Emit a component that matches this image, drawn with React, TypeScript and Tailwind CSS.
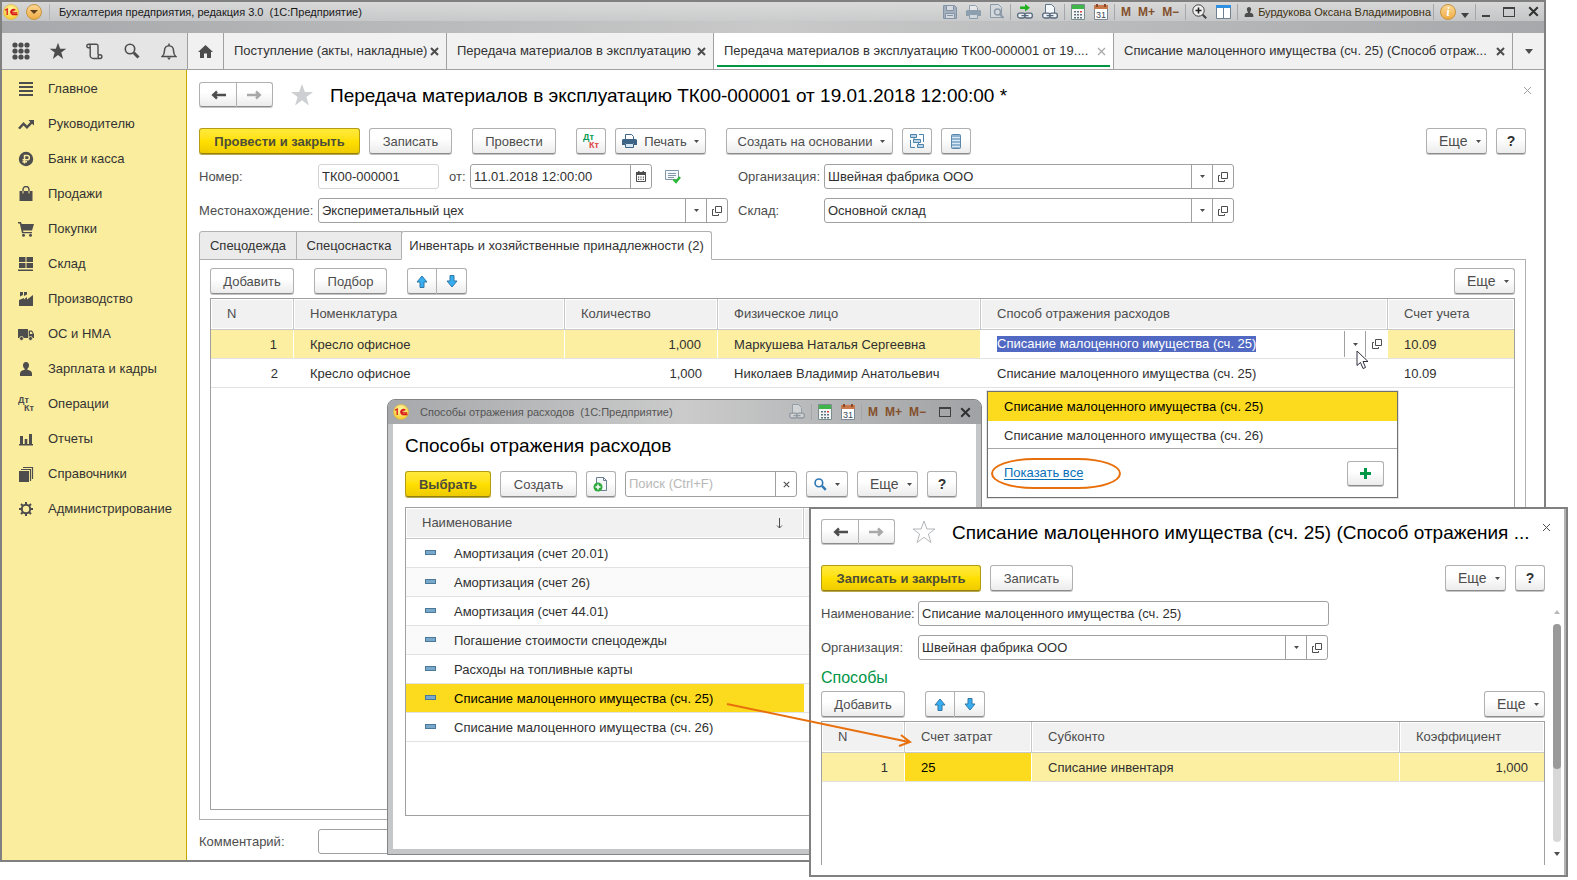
import * as React from "react"
import { cva, type VariantProps } from "class-variance-authority"
import { twMerge } from "tailwind-merge"

const buttonVariants = cva(
    "flex h-[26px] shrink-0 items-center justify-center rounded-[3px] border text-[13px] leading-none whitespace-nowrap",
    {
        variants: {
            variant: {
                default:
                    "border-[#b0b0b0] border-b-[#8c8c8c] bg-linear-to-b from-white from-40% to-[#ececec] text-[#4d4d4d] shadow-[0_1px_0_#c4c4c4]",
                primary:
                    "border-[#b39b12] border-b-[#94800c] bg-linear-to-b from-[#ffea3a] via-[#ffe000] to-[#efcb00] font-bold text-[#4d4d3a] shadow-[0_1px_0_#b8a850]",
            },
        },
        defaultVariants: { variant: "default" },
    },
)

interface ButtonProps extends React.ButtonHTMLAttributes<HTMLButtonElement>, VariantProps<typeof buttonVariants> {}

const Button = ({ className, variant, ...props }: ButtonProps) => (
    <button type="button" className={twMerge(buttonVariants({ variant }), className)} {...props} />
)

/* ---------- Icons ---------- */

type IconProps = { className?: string }

const Caret = ({ className = "" }: IconProps) => (
    <svg width="5" height="3" viewBox="0 0 5 3" className={className} fill="#4d4d4d">
        <path d="M0 0h5L2.5 3z" />
    </svg>
)

const Cross = ({ size = 9, color = "#4d4d4d", weight = 2 }: { size?: number; color?: string; weight?: number }) => (
    <svg width={size} height={size} viewBox="0 0 9 9" stroke={color} strokeWidth={weight} fill="none">
        <path d="M1 1l7 7M8 1L1 8" />
    </svg>
)

const OpenIcon = () => (
    <svg width="10" height="10" viewBox="0 0 10 10" fill="none" stroke="#4d4d4d">
        <path d="M3.5 .5h6v6h-6zM2 3.5H.5v6h6V8" />
    </svg>
)

const BackArrow = ({ color = "#4d4d4d", flip = false }: { color?: string; flip?: boolean }) => (
    <svg width="15" height="10" viewBox="0 0 15 10" fill="none" stroke={color} strokeWidth="2.400">
        <path d={flip ? "M0 5h13M9 1.500L12.800 5 9 8.500" : "M15 5H2M6 1.500L2.200 5 6 8.500"} />
    </svg>
)

const StarIcon = ({ size = 16, fill = "#4d4d4d", stroke = "none" }: { size?: number; fill?: string; stroke?: string }) => (
    <svg width={size} height={size} viewBox="0 0 24 24" fill={fill} stroke={stroke} strokeWidth="1">
        <path d="M12 1l2.900 8H23l-6.600 5 2.500 8.500L12 17.300 5.100 22.500 7.600 14 1 9h8.100z" />
    </svg>
)

const MoveArrow = ({ down = false }: { down?: boolean }) => (
    <svg width="12" height="13" viewBox="0 0 12 13" fill="#36aef0" stroke="#3077a8">
        <path d={down ? "M4 .5h4V6h3L6 12 1 6h3z" : "M4 12.500h4V7h3L6 1 1 7h3z"} />
    </svg>
)

const LogoIcon = () => (
    <svg width="16" height="16" viewBox="0 0 16 16">
        <defs>
            <radialGradient id="logoFill" cx="50%" cy="35%" r="65%">
                <stop offset="0" stopColor="#fffab0" />
                <stop offset="1" stopColor="#f6c928" />
            </radialGradient>
        </defs>
        <circle cx="8" cy="8" r="7.600" fill="url(#logoFill)" stroke="#d9b64c" strokeWidth=".6" />
        <path
            d="M2 6.200l2.200-1.200v6M12.300 6.300A2.600 2.600 0 1 0 9.500 10.500h5M10.900 7.300a1.100 1.100 0 1 0-1 1.500h4.300"
            fill="none"
            stroke="#d8181c"
            strokeWidth="1.300"
        />
    </svg>
)

const CalculatorIcon = () => (
    <svg width="14" height="16" viewBox="0 0 14 16">
        <path fill="#f4f6f6" stroke="#7b8c8c" d="M.5.5h13v15H.5z" />
        <path fill="#3fb54a" d="M1 1h12v4H1z" />
        <path fill="#5f7480" d="M3 7h2v1.500H3zM6 7h2v1.500H6zM3 10h2v1.500H3zM6 10h2v1.500H6zM3 13h2v1.500H3zM6 13h2v1.500H6zM9 10h2v1.500H9zM9 13h2v1.500H9z" />
        <path fill="#e04040" d="M9 7h2v1.500H9z" />
    </svg>
)

const CalendarIcon = () => (
    <svg width="14" height="16" viewBox="0 0 14 16">
        <path fill="#fff" stroke="#7b8794" d="M.5 2.500h13v13H.5z" />
        <path fill="#c8784a" d="M0 1h14v4H0z" />
        <path fill="#8a4a2a" d="M2 0h2v3H2zM10 0h2v3h-2z" />
        <text x="7" y="13.500" textAnchor="middle" fontSize="9" fontFamily="Liberation Sans, sans-serif" fill="#3a4a5a">
            31
        </text>
    </svg>
)

const LinkPageIcon = ({ arrow = false, faded = false }: { arrow?: boolean; faded?: boolean }) => (
    <svg width="16" height="16" viewBox="0 0 16 16" fill="none" className={faded ? "opacity-40" : ""}>
        {arrow ? (
            <path fill="#20b020" d="M3 2.500h5V0l5 3.700L8 7.500V5H3z" />
        ) : (
            <path fill="#f5f8fb" stroke="#60748a" d="M3.500 9V.5h6l3 3V9" />
        )}
        <rect x=".700" y="9.200" width="7.500" height="4.800" rx="2" fill="#eef2f5" stroke="#56687a" strokeWidth="1.300" />
        <rect x="7.800" y="9.200" width="7.500" height="4.800" rx="2" fill="#eef2f5" stroke="#56687a" strokeWidth="1.300" />
        <path stroke="#56687a" strokeWidth="1.300" d="M4.500 11.600h7" />
    </svg>
)

const SaveIcon = () => (
    <svg width="14" height="14" viewBox="0 0 14 14" fill="none" stroke="#8494a6">
        <path fill="#a3afbd" d="M.5.5h11l2 2v11H.5z" />
        <path fill="#d5dade" d="M3.500.5h7v5h-7zM2.500 8.500h9v5h-9z" />
        <path d="M4 10.500h6" />
    </svg>
)

const PrinterIcon = ({ faded = false }: { faded?: boolean }) => (
    <svg width="15" height="14" viewBox="0 0 15 14" className={faded ? "opacity-45" : ""}>
        <path fill="#fff" stroke="#3d6485" d="M3.500 6V.5h6l2 2V6" />
        <path fill="#3d6485" d="M1 5h13l1 1v5h-3V9H3v2H0V6z" />
        <path fill="#d6e6f2" stroke="#3d6485" d="M3.500 9.500h8v4h-8z" />
    </svg>
)

const PreviewIcon = () => (
    <svg width="14" height="15" viewBox="0 0 14 15" fill="none" stroke="#8c9aa8">
        <path fill="#d3d8dc" d="M.5.5h8l3 3v10H.5z" />
        <circle cx="7.500" cy="8" r="3" strokeWidth="1.500" />
        <path strokeWidth="2" d="M10 10.500l3.500 3.500" />
    </svg>
)

const ZoomInIcon = () => (
    <svg width="15" height="15" viewBox="0 0 15 15" fill="none" stroke="#404040">
        <circle cx="6.500" cy="6.500" r="5.700" fill="#f0f0f0" />
        <path strokeWidth="1.600" d="M3.500 6.500h6M6.500 3.500v6" stroke="#202020" />
        <path strokeWidth="2" d="M10.700 10.700l3.500 3.500" />
    </svg>
)

const PanelsIcon = () => (
    <svg width="15" height="14" viewBox="0 0 15 14">
        <path fill="#fff" stroke="#708090" d="M.5.5h14v13H.5zM7.500 3v10" />
        <path fill="#2f8fe0" d="M0 0h15v3H0z" />
    </svg>
)

const PersonIcon = ({ size = 14 }: { size?: number }) => (
    <svg width={size} height={size} viewBox="0 0 14 14" fill="#4d4d4d">
        <path d="M7 0c2 0 3 1.500 3 3.300C10 5 9.300 6.300 8.500 7v1c2.500.4 4.500 1.500 4.500 3.500V14H1v-2.500C1 9.500 3 8.400 5.500 8V7C4.700 6.300 4 5 4 3.300 4 1.500 5 0 7 0z" />
    </svg>
)

const SearchIcon = ({ color = "#4d4d4d" }: { color?: string }) => (
    <svg width="16" height="16" viewBox="0 0 16 16" fill="none" stroke={color}>
        <circle cx="6" cy="6" r="4.700" strokeWidth="1.600" />
        <path strokeWidth="3" d="M9.800 9.800l4.700 4.700" />
    </svg>
)

const DtKtIcon = ({ colored = false }: { colored?: boolean }) => (
    <svg width="17" height="16" viewBox="0 0 17 16" fontFamily="Liberation Sans, sans-serif" fontWeight="bold" fontSize="9">
        <text x="0" y="7" fill={colored ? "#0a9a50" : "#4d4d4d"}>
            Дт
        </text>
        <text x="6" y="15" fill={colored ? "#e04444" : "#4d4d4d"}>
            Кт
        </text>
    </svg>
)

const DateIcon = () => (
    <svg width="10" height="11" viewBox="0 0 10 11">
        <path fill="none" stroke="#4d4d4d" d="M.5 2.500h9v8h-9z" />
        <path fill="#4d4d4d" d="M0 1h10v3H0zM2 0h1.500v2H2zM6.500 0H8v2H6.500zM2 5.500h1.200v1.200H2zM4.400 5.500h1.200v1.200H4.400zM6.800 5.500H8v1.200H6.800zM2 7.800h1.200V9H2zM4.400 7.800h1.200V9H4.400zM6.800 7.800H8V9H6.800z" />
    </svg>
)

const PostedIcon = () => (
    <svg width="16" height="14" viewBox="0 0 16 14" fill="none">
        <path fill="#f6f9fb" stroke="#8296a6" d="M.5.5h13v9H.5z" />
        <path stroke="#8296a6" d="M3 3.500h8M3 5.500h8M3 7.500h6" />
        <path stroke="#2cb834" strokeWidth="2.400" d="M8.500 9.500l2.500 2.500 4-5" />
    </svg>
)

const StructureIcon = () => (
    <svg width="16" height="16" viewBox="0 0 16 16" fill="none" stroke="#4c83ad">
        <path fill="#bcd5e8" d="M1.500 1.500h6v3h-6zM4.500 6.500h7v3h-7zM8.500 11.500h6v3h-6z" />
        <path d="M10 1.500h4.500V9M1.500 7v7.500H6M5 4.500v2M9.500 9.500v2" />
    </svg>
)

const RegisterIcon = () => (
    <svg width="10" height="15" viewBox="0 0 10 15">
        <rect x=".5" y=".5" width="9" height="14" rx="1" fill="#8fb4d2" stroke="#5a88ab" />
        <path stroke="#d8e8f4" d="M1 3.500h8M1 6.500h8M1 9.500h8M1 12.500h8" />
    </svg>
)

const CopyAddIcon = () => (
    <svg width="16" height="16" viewBox="0 0 16 16">
        <path fill="#f4f8fb" stroke="#6a7f92" d="M3.500 1.500h7l3 3v10h-10zM10.500 1.500v3h3" />
        <circle cx="5" cy="11" r="4.500" fill="#2fa83e" />
        <path stroke="#fff" strokeWidth="1.500" d="M5 8.500v5M2.500 11h5" />
    </svg>
)

const itemIcons: Record<string, React.ReactNode> = {
    main: <path d="M1 1h14v2H1zM1 5h14v2H1zM1 9h14v2H1zM1 13h14v2H1z" />,
    chart: <path d="M0 12l5.500-6 3.500 3.500 3.300-3.600L10.500 4H16v5.500l-2-1.800-5 5.200L5.500 9.400 2 13.300z" />,
    ruble: (
        <>
            <circle cx="8" cy="8" r="7.200" />
            <path d="M6.500 12.500V4.500h2.700a2.100 2.100 0 0 1 0 4.300H4.500M4.500 10.700H9" fill="none" stroke="#fbeb9e" strokeWidth="1.500" />
        </>
    ),
    bag: (
        <>
            <path d="M1.500 5h13v10h-13z" />
            <path d="M5 7V3.500a3 3 0 0 1 6 0V7" fill="none" stroke="#4d4d4d" strokeWidth="1.400" />
            <path d="M5 5v2.500M11 5v2.500" stroke="#fbeb9e" />
        </>
    ),
    cart: (
        <>
            <path d="M0 1h3l.700 2H16l-2 6.500H5L5.400 11H14v1.300H4L1.800 2.500H0z" />
            <circle cx="5.500" cy="14.200" r="1.500" />
            <circle cx="12.500" cy="14.200" r="1.500" />
        </>
    ),
    warehouse: <path d="M1 1h6.500v5H1zM8.500 1H15v5H8.500zM1 7h6.500v5H1zM8.500 7H15v5H8.500zM0 13.500h15V15H0z" />,
    factory: <path d="M1 15V9l5-2v1.500l3-2.500v2.500L15 4v11zM2 1h3v3L2 5.500zM6 1h3v2.500L6 5z" />,
    truck: (
        <>
            <path d="M0 3h10v9H0zM10.700 4.500H14l2 3.500v4h-5.300z" />
            <path d="M12 5.700h1.500l1.200 2.300H12z" fill="#fbeb9e" />
            <circle cx="3.500" cy="12.500" r="2" stroke="#fbeb9e" strokeWidth=".8" />
            <circle cx="12.500" cy="12.500" r="2" stroke="#fbeb9e" strokeWidth=".8" />
        </>
    ),
    person: <path d="M8 1c2 0 3 1.400 3 3.200 0 1.600-.8 3-1.700 3.600v1c2.700.5 4.700 1.700 4.700 3.700V15H2v-2.500c0-2 2-3.200 4.700-3.700v-1C5.800 7.200 5 5.800 5 4.200 5 2.400 6 1 8 1z" />,
    reports: <path d="M1 13h14v1.500H1zM2 5h3v8H2zM6.700 8h2.600v5H6.700zM11 3h3v10h-3z" />,
    books: (
        <>
            <path d="M1 5h10v11H1z" />
            <path d="M3 3.500h9.500V15M5 1.500h9.500V13" fill="none" stroke="#4d4d4d" strokeWidth="1.200" />
        </>
    ),
    gear: (
        <>
            <circle cx="8" cy="8" r="4.200" fill="none" stroke="#4d4d4d" strokeWidth="2" />
            <path
                d="M8 1v2.500M8 12.500V15M1 8h2.500M12.500 8H15M3 3l1.800 1.800M11.200 11.200L13 13M13 3l-1.800 1.800M4.800 11.200L3 13"
                stroke="#4d4d4d"
                strokeWidth="2"
            />
        </>
    ),
}

/* ---------- Shared form parts ---------- */

const MoreButton = () => (
    <Button className="w-[61px] justify-start pl-3 text-[14px]">
        Еще
        <Caret className="ml-2" />
    </Button>
)

const HelpButton = () => (
    <Button className="w-[30px] text-[14px] font-bold text-[#303030]" aria-label="Справка">
        ?
    </Button>
)

const NavButtons = () => (
    <div className="flex">
        <Button className="h-[25px] w-[38px] rounded-r-none" aria-label="Назад">
            <BackArrow />
        </Button>
        <Button className="h-[25px] w-[36px] rounded-l-none border-l-0" aria-label="Вперед">
            <BackArrow color="#a8a8a8" flip />
        </Button>
    </div>
)

const MoveButtons = () => (
    <div className="flex">
        <Button className="w-[30px] rounded-r-none" aria-label="Переместить вверх">
            <MoveArrow />
        </Button>
        <Button className="w-[30px] rounded-l-none border-l-0" aria-label="Переместить вниз">
            <MoveArrow down />
        </Button>
    </div>
)

interface FieldProps {
    id: string
    label: string
    value: string
    labelClass: string
    boxClass: string
    buttons?: React.ReactNode[]
}

/** Label and text box, with optional buttons built into the right end of the box */
const Field = ({ id, label, value, labelClass, boxClass, buttons = [] }: FieldProps) => (
    <div className="flex items-center">
        <label htmlFor={id} className={twMerge("shrink-0 whitespace-nowrap text-[#4d4d4d]", labelClass)}>
            {label}
        </label>
        <div className={twMerge("flex h-[25px] overflow-hidden rounded-[3px] border border-[#a0a0a0] bg-white", boxClass)}>
            <input id={id} defaultValue={value} className="min-w-0 flex-1 px-[3px] text-[#303030] outline-none" />
            {buttons.map((icon, i) => (
                <button
                    key={i}
                    type="button"
                    aria-label={i === 0 ? "Выбрать" : "Открыть"}
                    className="flex w-[21px] items-center justify-center border-l border-[#a0a0a0]"
                >
                    {icon}
                </button>
            ))}
        </div>
    </div>
)

const Th = ({ className, ...props }: React.ThHTMLAttributes<HTMLTableCellElement>) => (
    <th
        className={twMerge(
            "h-[31px] border-r border-b border-[#c8c8c8] bg-[#f1f1f1] px-4 text-left font-normal text-[#4d4d4d] shadow-[inset_0_0_0_1px_#fff] last:border-r-0",
            className,
        )}
        {...props}
    />
)

const Td = ({ className, ...props }: React.TdHTMLAttributes<HTMLTableCellElement>) => (
    <td className={twMerge("h-[29px] border-b border-[#e2e2e2] px-4 pt-[2px] text-[#303030]", className)} {...props} />
)

/* ---------- Title bar and tabs ---------- */

const Separator = () => <span className="-mx-[3px] h-4 w-px bg-[#a4a6a8]" />

const MemoryButtons = () => (
    <div className="flex gap-[7px]">
        {["M", "M+", "M−"].map((m) => (
            <button key={m} type="button" className="text-[12px] font-bold text-[#84502c]">
                {m}
            </button>
        ))}
    </div>
)

const TitleBar = () => (
    <header className="h-[31px] shrink-0 bg-linear-to-r from-[#a6a8ab] via-[#c9c9c9] to-[#a6a8ab] text-[11px]">
        <div className="flex h-[19px] items-center bg-linear-to-b from-[#dcdcdc]/90 to-[#cbcccd]/80 pr-[5px] pl-px">
            <LogoIcon />
            <button
                type="button"
                aria-label="Меню"
                className="ml-[7px] flex size-4 items-center justify-center rounded-full border border-[#c89440] bg-linear-to-b from-[#fbd792] to-[#efac42]"
            >
                <svg width="8" height="4" viewBox="0 0 8 4" fill="#604020">
                    <path d="M0 0h8L4 4z" />
                </svg>
            </button>
            <span className="ml-[7px] h-4 w-px bg-[#b4b4b4]" />
            <span className="ml-[9px] whitespace-pre text-[#181818]">Бухгалтерия предприятия, редакция 3.0  (1С:Предприятие)</span>
            <div className="ml-auto flex items-center gap-[9px]">
                <SaveIcon />
                <PrinterIcon faded />
                <PreviewIcon />
                <Separator />
                <LinkPageIcon arrow />
                <LinkPageIcon />
                <Separator />
                <CalculatorIcon />
                <CalendarIcon />
                <Separator />
                <MemoryButtons />
                <Separator />
                <ZoomInIcon />
                <PanelsIcon />
                <Separator />
                <span className="-mr-1 flex items-center gap-1 whitespace-nowrap text-[#3c3010]">
                    <PersonIcon size={10} />
                    Бурдукова Оксана Владимировна
                </span>
                <Separator />
                <button
                    type="button"
                    aria-label="О программе"
                    className="flex size-4 items-center justify-center rounded-full border border-[#c89440] bg-linear-to-b from-[#fbd792] to-[#efac42] font-serif text-[12px] leading-none font-bold text-white italic"
                >
                    i
                </button>
                <svg width="8" height="5" viewBox="0 0 8 5" fill="#404040" className="-ml-1 mt-2">
                    <path d="M0 0h8L4 5z" />
                </svg>
                <Separator />
                <span className="mt-2 h-[2px] w-2 bg-[#404040]" />
                <span className="ml-1 h-[10px] w-3 border border-t-2 border-[#404040]" />
                <span className="ml-1">
                    <Cross size={11} color="#303030" weight={1.6} />
                </span>
            </div>
        </div>
    </header>
)

const tabs = [
    { title: "Поступление (акты, накладные)", className: "w-[223px]" },
    { title: "Передача материалов в эксплуатацию", className: "w-[267px]" },
    { title: "Передача материалов в эксплуатацию ТК00-000001 от 19....", className: "w-[400px]", active: true },
    { title: "Списание малоценного имущества (сч. 25) (Способ отраж...", className: "min-w-0 flex-1" },
]

const TabBar = () => (
    <div className="flex h-[37px] shrink-0 border-b border-[#a0a0a0] bg-[#f1f1f1]">
        <div className="flex w-[185px] shrink-0 items-center bg-[#e5e5e5] *:flex *:w-[37px] *:justify-center">
            <button type="button" aria-label="Меню функций">
                <svg width="18" height="18" viewBox="0 0 18 18" fill="#4d4d4d">
                    {[3, 9, 15].map((y) => [3, 9, 15].map((x) => <circle key={`${x}-${y}`} cx={x} cy={y} r="2.600" />))}
                </svg>
            </button>
            <button type="button" aria-label="Избранное">
                <StarIcon size={18} />
            </button>
            <button type="button" aria-label="История">
                <svg width="17" height="17" viewBox="0 0 17 17" fill="none" stroke="#4d4d4d" strokeWidth="1.400">
                    <path d="M4.200 4.700H2.500A1.700 1.700 0 1 1 4.200 3v9.500a3 3 0 0 0 3 3M2.500 1.200h7.800a1.700 1.700 0 0 1 1.700 1.800v8.800M7.200 15.500h6.800a1.900 1.900 0 1 0-1.900-1.900 2 2 0 0 0 .6 1.400" />
                </svg>
            </button>
            <button type="button" aria-label="Поиск">
                <SearchIcon />
            </button>
            <button type="button" aria-label="Уведомления">
                <svg width="16" height="17" viewBox="0 0 16 17" fill="none" stroke="#4d4d4d" strokeWidth="1.500">
                    <path d="M1.200 13.500c1.800-1.500 2.300-3 2.300-6a4.500 4.800 0 0 1 9 0c0 3 .5 4.500 2.300 6zM8 2.700V.5" />
                    <path fill="#4d4d4d" stroke="none" d="M6 14.500h4L8 17z" />
                </svg>
            </button>
        </div>
        <button
            type="button"
            aria-label="Начальная страница"
            className="flex w-[37px] shrink-0 items-center justify-center border-x border-[#a0a0a0]"
        >
            <svg width="15" height="13" viewBox="0 0 15 13" fill="#4d4d4d">
                <path d="M7.500 0L15 7h-2v6H9V8.500H6V13H2V7H0z" />
            </svg>
        </button>
        {tabs.map(({ title, className, active }) => (
            <div
                key={title}
                className={twMerge(
                    "relative flex items-center justify-between border-r border-[#a0a0a0] pr-[7px] pl-[10px] whitespace-nowrap text-[#333]",
                    className,
                    active && "bg-white",
                )}
            >
                <button type="button">{title}</button>
                <button type="button" aria-label="Закрыть">
                    <Cross color={active ? "#a8a8a8" : "#4d4d4d"} weight={active ? 1.3 : 2} />
                </button>
                {active && <span className="absolute inset-x-[3px] bottom-[2px] h-[2px] bg-[#009646]" />}
            </div>
        ))}
        <button type="button" aria-label="Список вкладок" className="flex w-[31px] shrink-0 items-center justify-center">
            <svg width="8" height="5" viewBox="0 0 8 5" fill="#4d4d4d">
                <path d="M0 0h8L4 5z" />
            </svg>
        </button>
    </div>
)

const sections = [
    { name: "Главное", icon: "main" },
    { name: "Руководителю", icon: "chart" },
    { name: "Банк и касса", icon: "ruble" },
    { name: "Продажи", icon: "bag" },
    { name: "Покупки", icon: "cart" },
    { name: "Склад", icon: "warehouse" },
    { name: "Производство", icon: "factory" },
    { name: "ОС и НМА", icon: "truck" },
    { name: "Зарплата и кадры", icon: "person" },
    { name: "Операции", icon: "dtkt" },
    { name: "Отчеты", icon: "reports" },
    { name: "Справочники", icon: "books" },
    { name: "Администрирование", icon: "gear" },
]

const Sidebar = () => (
    <nav className="w-[185px] shrink-0 border-r border-[#c4a800] bg-[#fbed9e]">
        {sections.map(({ name, icon }) => (
            <a key={name} href="#" className="flex h-[35px] items-center pt-[2px] pl-4 text-[#333]">
                <span className="w-[30px]">
                    {icon === "dtkt" ? (
                        <DtKtIcon />
                    ) : (
                        <svg width="16" height="16" viewBox="0 0 16 16" fill="#4d4d4d">
                            {itemIcons[icon]}
                        </svg>
                    )}
                </span>
                {name}
            </a>
        ))}
    </nav>
)

/* ---------- Document form ---------- */

const items = [
    { n: 1, name: "Кресло офисное", qty: "1,000", person: "Маркушева Наталья Сергеевна", way: "Списание малоценного имущества (сч. 25)", account: "10.09" },
    { n: 2, name: "Кресло офисное", qty: "1,000", person: "Николаев Владимир Анатольевич", way: "Списание малоценного имущества (сч. 25)", account: "10.09" },
]

const ItemsTable = () => (
    <div className="min-h-0 flex-1 border border-[#a0a0a0]">
        <table className="w-full table-fixed border-separate border-spacing-0">
            <colgroup>
                <col className="w-[83px]" />
                <col className="w-[271px]" />
                <col className="w-[153px]" />
                <col className="w-[263px]" />
                <col />
                <col className="w-[126px]" />
            </colgroup>
            <thead>
                <tr>
                    <Th>N</Th>
                    <Th>Номенклатура</Th>
                    <Th>Количество</Th>
                    <Th>Физическое лицо</Th>
                    <Th>Способ отражения расходов</Th>
                    <Th>Счет учета</Th>
                </tr>
            </thead>
            <tbody>
                {items.map((item) => {
                    const current = item.n === 1
                    const tone = current ? "bg-[#fcefa1] border-r border-r-white" : ""
                    return (
                        <tr key={item.n}>
                            <Td className={twMerge(tone, "text-right")}>{item.n}</Td>
                            <Td className={tone}>{item.name}</Td>
                            <Td className={twMerge(tone, "text-right")}>{item.qty}</Td>
                            <Td className={tone}>{item.person}</Td>
                            {current ? (
                                <Td className="py-0 pr-0">
                                    <div className="flex h-[28px] items-center">
                                        <span className="bg-[#5169c2] text-white">{item.way}</span>
                                        <button type="button" aria-label="Выбрать" className="ml-auto flex h-[26px] w-[22px] items-center justify-center border-x border-[#a0a0a0]">
                                            <Caret />
                                        </button>
                                        <button type="button" aria-label="Открыть" className="flex w-[22px] justify-center">
                                            <OpenIcon />
                                        </button>
                                    </div>
                                </Td>
                            ) : (
                                <Td>{item.way}</Td>
                            )}
                            <Td className={current ? "bg-[#fcefa1]" : ""}>{item.account}</Td>
                        </tr>
                    )
                })}
            </tbody>
        </table>
    </div>
)

const DocumentForm = () => (
    <main className="flex min-w-0 flex-1 flex-col bg-white pr-[18px] pb-[6px] pl-3">
        <div className="mt-3 -mr-[6px] flex h-[25px] items-center">
            <NavButtons />
            <span className="ml-[17px]">
                <StarIcon size={24} fill="#cdcfd2" />
            </span>
            <h1 className="ml-4 pt-[2px] text-[19px] leading-6 whitespace-nowrap text-black">
                Передача материалов в эксплуатацию ТК00-000001 от 19.01.2018 12:00:00 *
            </h1>
            <button type="button" aria-label="Закрыть" className="mt-1 ml-auto self-start">
                <Cross color="#a0a0a0" weight={1} />
            </button>
        </div>
        <div className="mt-[21px] flex">
            <Button variant="primary" className="w-[161px]">
                Провести и закрыть
            </Button>
            <Button className="ml-[9px] w-[83px]">Записать</Button>
            <Button className="ml-5 w-[84px]">Провести</Button>
            <Button className="ml-5 w-[30px]" aria-label="Дт/Кт">
                <DtKtIcon colored />
            </Button>
            <Button className="ml-[9px] w-[91px] gap-[7px]">
                <PrinterIcon />
                Печать
                <Caret />
            </Button>
            <Button className="ml-5 w-[167px] gap-2 pl-1">
                Создать на основании
                <Caret />
            </Button>
            <Button className="ml-[9px] w-[30px]" aria-label="Структура подчиненности">
                <StructureIcon />
            </Button>
            <Button className="ml-[9px] w-[30px]" aria-label="Движения документа">
                <RegisterIcon />
            </Button>
            <div className="ml-auto flex gap-[9px]">
                <MoreButton />
                <HelpButton />
            </div>
        </div>
        <div className="mt-[10px] grid grid-cols-[539px_1fr] gap-y-[9px]">
            <div className="flex items-center">
                <Field id="number" label="Номер:" value="ТК00-000001" labelClass="w-[119px]" boxClass="w-[121px] border-[#d4d4d4]" />
                <div className="ml-[10px]">
                    <Field id="date" label="от:" value="11.01.2018 12:00:00" labelClass="w-[21px]" boxClass="w-[182px]" buttons={[<DateIcon />]} />
                </div>
                <span className="ml-[13px]">
                    <PostedIcon />
                </span>
            </div>
            <Field id="org" label="Организация:" value="Швейная фабрика ООО" labelClass="w-[86px]" boxClass="w-[410px]" buttons={[<Caret />, <OpenIcon />]} />
            <Field id="place" label="Местонахождение:" value="Экспериметальный цех" labelClass="w-[119px]" boxClass="w-[410px]" buttons={[<Caret />, <OpenIcon />]} />
            <Field id="store" label="Склад:" value="Основной склад" labelClass="w-[86px]" boxClass="w-[410px]" buttons={[<Caret />, <OpenIcon />]} />
        </div>
        <div className="z-10 mt-2 -mb-px flex h-[29px] *:border *:border-[#b0b0b0]" role="tablist">
            <button type="button" role="tab" className="w-[98px] rounded-tl-[3px] bg-[#ebebeb] whitespace-nowrap text-[#333]">
                Спецодежда
            </button>
            <button type="button" role="tab" className="-ml-px w-[106px] bg-[#ebebeb] whitespace-nowrap text-[#333]">
                Спецоснастка
            </button>
            <button type="button" role="tab" aria-selected className="-ml-px w-[311px] rounded-t-[3px] border-b-white! bg-white whitespace-nowrap text-[#333]">
                Инвентарь и хозяйственные принадлежности (2)
            </button>
        </div>
        <section className="flex min-h-0 flex-1 flex-col border border-[#b0b0b0] px-[10px] pt-2 pb-[9px]">
            <div className="mb-1 flex">
                <Button className="w-[84px]">Добавить</Button>
                <Button className="mr-5 ml-5 w-[73px]">Подбор</Button>
                <MoveButtons />
                <div className="ml-auto">
                    <MoreButton />
                </div>
            </div>
            <ItemsTable />
        </section>
        <div className="mt-[9px]">
            <Field id="comment" label="Комментарий:" value="" labelClass="w-[119px]" boxClass="w-[910px]" />
        </div>
    </main>
)

/* ---------- Windows and pop-ups over the form ---------- */

const ways = [
    "Амортизация (счет 20.01)",
    "Амортизация (счет 26)",
    "Амортизация (счет 44.01)",
    "Погашение стоимости спецодежды",
    "Расходы на топливные карты",
    "Списание малоценного имущества (сч. 25)",
    "Списание малоценного имущества (сч. 26)",
]

const WaysDialog = () => (
    <div
        role="dialog"
        aria-label="Способы отражения расходов"
        className="absolute top-[399px] left-[387px] flex h-[456px] w-[595px] flex-col rounded-t-[8px] border border-[#848484] bg-[#c4c6c8] px-[5px] pb-[5px]"
    >
        <div className="-mx-[5px] flex h-6 shrink-0 items-center rounded-t-[7px] bg-linear-to-r from-[#a6a8ab] via-[#cbcbcb] to-[#a0a2a5] pr-[10px] pl-[5px] text-[11px]">
            <LogoIcon />
            <span className="ml-[11px] whitespace-pre text-[#555]">Способы отражения расходов  (1С:Предприятие)</span>
            <div className="ml-auto flex items-center gap-[9px]">
                <LinkPageIcon faded />
                <Separator />
                <CalculatorIcon />
                <CalendarIcon />
                <Separator />
                <MemoryButtons />
                <Separator />
                <span className="h-[10px] w-3 border border-t-2 border-[#404040]" />
                <Cross size={11} color="#303030" weight={1.6} />
            </div>
        </div>
        <div className="flex min-h-0 flex-1 flex-col bg-white px-3 pb-[33px]">
            <h2 className="mt-[10px] text-[19px] leading-6 text-black">Способы отражения расходов</h2>
            <div className="mt-[13px] flex gap-[9px]">
                <Button variant="primary" className="w-[86px]">
                    Выбрать
                </Button>
                <Button className="w-[77px]">Создать</Button>
                <Button className="w-[30px]" aria-label="Скопировать">
                    <CopyAddIcon />
                </Button>
                <div className="flex h-[26px] w-[172px] rounded-[3px] border border-[#a0a0a0]">
                    <input aria-label="Поиск" placeholder="Поиск (Ctrl+F)" className="min-w-0 flex-1 px-[3px] outline-none placeholder:text-[#b8b8b8]" />
                    <button type="button" aria-label="Очистить" className="flex w-[21px] items-center justify-center border-l border-[#a0a0a0]">
                        <Cross size={7} weight={1.4} />
                    </button>
                </div>
                <Button className="w-[42px] gap-2" aria-label="Найти">
                    <svg width="13" height="13" viewBox="0 0 16 16" fill="none" stroke="#2f78b4">
                        <circle cx="6" cy="6" r="4.700" strokeWidth="2" />
                        <path strokeWidth="3" d="M9.800 9.800l4.700 4.700" />
                    </svg>
                    <Caret />
                </Button>
                <MoreButton />
                <HelpButton />
            </div>
            <div className="mt-[10px] min-h-0 flex-1 border border-[#a0a0a0]">
                <table className="w-full table-fixed border-separate border-spacing-0">
                    <colgroup>
                        <col className="w-[398px]" />
                        <col />
                    </colgroup>
                    <thead>
                        <tr>
                            <Th>
                                <div className="flex items-center justify-between pr-1">
                                    Наименование
                                    <svg width="7" height="11" viewBox="0 0 7 11" fill="none" stroke="#4d4d4d">
                                        <path d="M3.500 0v10M1 7.500L3.500 10 6 7.500" />
                                    </svg>
                                </div>
                            </Th>
                            <Th />
                        </tr>
                    </thead>
                    <tbody>
                        {ways.map((way, i) => (
                            <tr key={way} className={i % 2 ? "bg-[#fafafa]" : "bg-white"}>
                                <Td className={i === 5 ? "bg-[#fcdb1f] text-black" : ""}>
                                    <div className="flex items-center gap-[18px] pl-[3px]">
                                        <span className="mb-[3px] h-[5px] w-[11px] border border-[#4c7898] bg-[#78a8cc]" />
                                        {way}
                                    </div>
                                </Td>
                                <Td />
                            </tr>
                        ))}
                    </tbody>
                </table>
            </div>
        </div>
    </div>
)

const WayPicker = () => (
    <div className="absolute top-[391px] left-[987px] w-[411px] border border-[#707070] bg-white shadow-[0_0_0_1px_#e4e4e4]">
        <button type="button" className="flex h-[29px] w-full items-center bg-[#fcdb1f] px-4 text-black">
            Списание малоценного имущества (сч. 25)
        </button>
        <button type="button" className="flex h-[28px] w-full items-center border-b border-[#a8a8a8] px-4 pt-[2px] text-[#303030]">
            Списание малоценного имущества (сч. 26)
        </button>
        <div className="flex h-[48px] items-center justify-between pr-[13px] pl-[3px]">
            <a
                href="#"
                className="flex h-[31px] w-[130px] items-center rounded-[44px/16px] border-2 border-[#e8700c] pl-[11px] text-[#0a70b8] underline underline-offset-2"
            >
                Показать все
            </a>
            <Button className="h-[25px] w-[37px]" aria-label="Создать">
                <svg width="11" height="11" viewBox="0 0 11 11" stroke="#009646" strokeWidth="3">
                    <path d="M5.500 0v11M0 5.500h11" />
                </svg>
            </Button>
        </div>
    </div>
)

const WayWindow = () => (
    <div
        role="dialog"
        aria-label="Списание малоценного имущества"
        className="absolute top-[507px] left-[809px] flex h-[370px] w-[759px] flex-col border-2 border-[#808080] bg-white shadow-[inset_-2px_0_0_#b4b4b4]"
    >
        <div className="mt-[10px] flex h-[25px] shrink-0 items-center pr-[15px] pl-[10px]">
            <NavButtons />
            <span className="ml-[17px]">
                <StarIcon size={24} fill="#fff" stroke="#b4b6ba" />
            </span>
            <h2 className="ml-4 pt-[2px] text-[19px] leading-6 whitespace-nowrap text-black">
                Списание малоценного имущества (сч. 25) (Способ отражения ...
            </h2>
            <button type="button" aria-label="Закрыть" className="mt-1 ml-auto self-start">
                <Cross weight={1} />
            </button>
        </div>
        <div className="flex min-h-0 flex-1">
            <div className="flex min-w-0 flex-1 flex-col pb-[10px] pl-[10px]">
                <div className="mt-[21px] flex gap-[9px]">
                    <Button variant="primary" className="w-[160px]">
                        Записать и закрыть
                    </Button>
                    <Button className="w-[83px]">Записать</Button>
                    <div className="ml-auto flex gap-[9px]">
                        <MoreButton />
                        <HelpButton />
                    </div>
                </div>
                <div className="mt-[10px] flex flex-col gap-[9px]">
                    <Field id="way-name" label="Наименование:" value="Списание малоценного имущества (сч. 25)" labelClass="w-[97px]" boxClass="w-[411px]" />
                    <Field id="way-org" label="Организация:" value="Швейная фабрика ООО" labelClass="w-[97px]" boxClass="w-[410px]" buttons={[<Caret />, <OpenIcon />]} />
                </div>
                <h3 className="mt-[8px] text-[16px] leading-5 text-[#009646]">Способы</h3>
                <div className="mt-[3px] flex gap-5">
                    <Button className="w-[84px]">Добавить</Button>
                    <MoveButtons />
                    <div className="ml-auto">
                        <MoreButton />
                    </div>
                </div>
                <div className="mt-1 min-h-0 flex-1 border border-b-0 border-[#a0a0a0]">
                    <table className="w-full table-fixed border-separate border-spacing-0">
                        <colgroup>
                            <col className="w-[83px]" />
                            <col className="w-[127px]" />
                            <col />
                            <col className="w-[144px]" />
                        </colgroup>
                        <thead>
                            <tr>
                                <Th>N</Th>
                                <Th>Счет затрат</Th>
                                <Th>Субконто</Th>
                                <Th>Коэффициент</Th>
                            </tr>
                        </thead>
                        <tbody>
                            <tr>
                                <Td className="border-r border-r-white bg-[#fcefa1] text-right">1</Td>
                                <Td className="border-r border-r-white bg-[#fcdb1f] text-black">25</Td>
                                <Td className="border-r border-r-white bg-[#fcefa1]">Списание инвентаря</Td>
                                <Td className="bg-[#fcefa1] text-right">1,000</Td>
                            </tr>
                        </tbody>
                    </table>
                </div>
            </div>
            <div className="flex w-[21px] shrink-0 flex-col items-center pt-[66px] pr-[2px] pb-[19px] pl-[5px]">
                <svg width="6" height="4" viewBox="0 0 6 4" fill="#b8b8b8" className="shrink-0">
                    <path d="M3 0l3 4H0z" />
                </svg>
                <div className="mt-[10px] w-2 flex-1 rounded-full bg-[#d8d8d8]">
                    <div className="h-2/3 rounded-full bg-[#9a9a9a]" />
                </div>
                <svg width="6" height="4" viewBox="0 0 6 4" fill="#4d4d4d" className="mt-[10px] shrink-0">
                    <path d="M0 0h6L3 4z" />
                </svg>
            </div>
        </div>
    </div>
)

export default function App() {
    return (
        <div className="relative h-screen min-h-[880px] bg-white pr-[31px] pb-[18px] font-['Liberation_Sans',Arial,sans-serif] text-[13px] leading-4">
            <div className="flex h-full min-h-[862px] flex-col border-2 border-[#808080]">
                <TitleBar />
                <TabBar />
                <div className="flex min-h-0 flex-1">
                    <Sidebar />
                    <DocumentForm />
                </div>
            </div>
            <WaysDialog />
            <WayPicker />
            <WayWindow />
            <svg width="188" height="46" viewBox="0 0 188 46" fill="none" stroke="#e8700c" strokeWidth="2" className="absolute top-[701px] left-[726px]">
                <path d="M1 3l182 38M175 34l9 7-11 4" />
            </svg>
            <svg width="13" height="20" viewBox="0 0 13 20" fill="#fff" stroke="#303040" className="absolute top-[350px] left-[1356px]">
                <path d="M1 1v14.500l3.500-3 2.500 6 2.500-1-2.500-6H12z" />
            </svg>
        </div>
    )
}
